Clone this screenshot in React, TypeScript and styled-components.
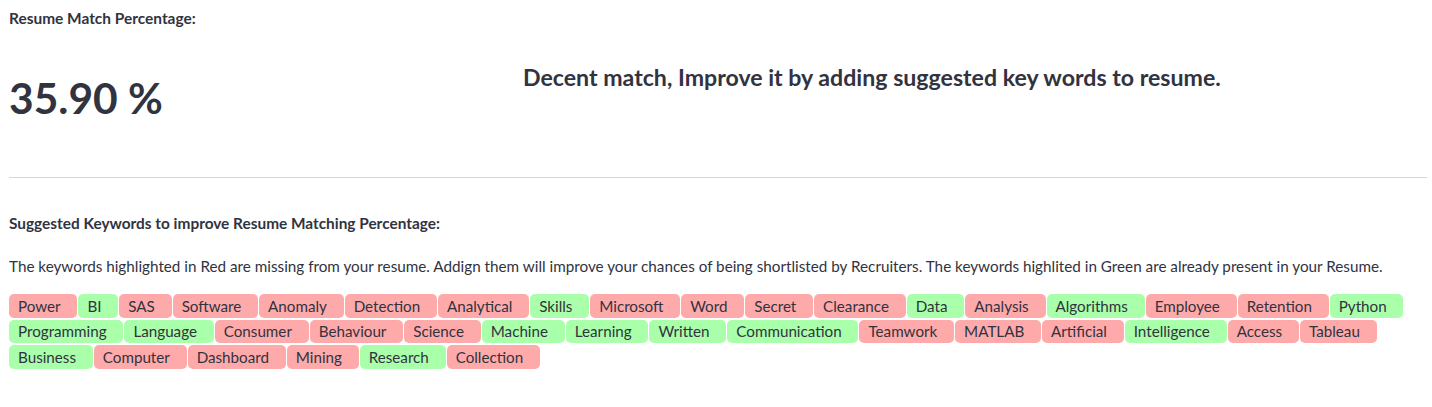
import React from "react";
import styled, { createGlobalStyle } from "styled-components";

const GlobalStyle = createGlobalStyle`
  html, body { margin: 0; padding: 0; background: #ffffff; }
  body {
    font-family: "Lato", "Noto Sans", sans-serif;
    color: #31333f;
    -webkit-font-smoothing: antialiased;
  }
`;

const Page = styled.main`
  padding: 8px 5px 0 9px;
  display: flex;
  flex-direction: column;
`;

const TopGrid = styled.section`
  display: grid;
  grid-template-columns: 514px 1fr;
  height: 169px;
`;

const LeftCol = styled.div`
  display: flex;
  flex-direction: column;
`;

const RightCol = styled.div`
  padding-top: 53px;
`;

const Label = styled.div`
  font-size: 15.45px;
  font-weight: 700;
  line-height: 20px;
`;

const Metric = styled.div`
  margin-top: 44px;
  font-size: 42.5px;
  font-weight: 700;
  line-height: 52px;
`;

const Verdict = styled.h3`
  margin: 0;
  font-size: 23.15px;
  font-weight: 700;
  line-height: 32px;
`;

const Divider = styled.hr`
  margin: 0 0 35px 0;
  border: none;
  border-top: 1px solid #d6d6d9;
  height: 0;
`;

const SectionTitle = styled.div`
  font-size: 15.4px;
  font-weight: 700;
  line-height: 20px;
`;

const Note = styled.p`
  margin: 21px 0 16px;
  font-size: 15.25px;
  line-height: 24px;
  white-space: nowrap;
`;

const TagRows = styled.div`
  display: flex;
  flex-direction: column;
  gap: 2px;
`;

const TagRow = styled.div`
  display: flex;
  gap: 1px;
`;

const Tag = styled.span<{ $present: boolean }>`
  display: inline-flex;
  align-items: center;
  height: 23.5px;
  padding: 0 16.8px 0 9px;
  border-radius: 5px;
  font-size: 15.2px;
  background: ${(p) => (p.$present ? "#aaffaa" : "#ffaaaa")};
  color: #31333f;
  white-space: nowrap;
`;

type Kw = [string, boolean];

const rows: Kw[][] = [
  [
    ["Power", false], ["BI", true], ["SAS", false], ["Software", false], ["Anomaly", false],
    ["Detection", false], ["Analytical", false], ["Skills", true], ["Microsoft", false],
    ["Word", false], ["Secret", false], ["Clearance", false], ["Data", true], ["Analysis", false],
    ["Algorithms", true], ["Employee", false], ["Retention", false], ["Python", true],
  ],
  [
    ["Programming", true], ["Language", true], ["Consumer", false], ["Behaviour", false],
    ["Science", false], ["Machine", true], ["Learning", true], ["Written", true],
    ["Communication", true], ["Teamwork", false], ["MATLAB", false], ["Artificial", false],
    ["Intelligence", true], ["Access", false], ["Tableau", false],
  ],
  [
    ["Business", true], ["Computer", false], ["Dashboard", false], ["Mining", false],
    ["Research", true], ["Collection", false],
  ],
];

export default function App() {
  return (
    <>
      <GlobalStyle />
      <Page>
        <TopGrid>
          <LeftCol>
            <Label>Resume Match Percentage:</Label>
            <Metric>35.90 %</Metric>
          </LeftCol>
          <RightCol>
            <Verdict>Decent match, Improve it by adding suggested key words to resume.</Verdict>
          </RightCol>
        </TopGrid>
        <Divider />
        <SectionTitle>Suggested Keywords to improve Resume Matching Percentage:</SectionTitle>
        <Note>
          The keywords highlighted in Red are missing from your resume. Addign them will improve your
          chances of being shortlisted by Recruiters. The keywords highlited in Green are already present
          in your Resume.
        </Note>
        <TagRows>
          {rows.map((row, i) => (
            <TagRow key={i}>
              {row.map(([word, present]) => (
                <Tag key={word} $present={present}>
                  {word}
                </Tag>
              ))}
            </TagRow>
          ))}
        </TagRows>
      </Page>
    </>
  );
}
